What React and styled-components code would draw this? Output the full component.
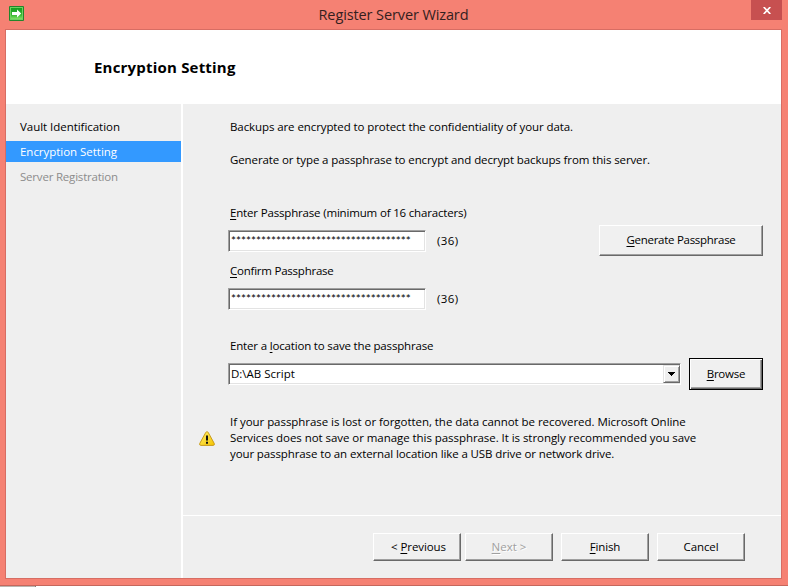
import React from "react";
import styled, { createGlobalStyle, css } from "styled-components";

const GlobalStyle = createGlobalStyle`
  html, body { margin: 0; padding: 0; overflow: hidden; background: #fff; }
  * { box-sizing: border-box; }
`;

const Desktop = styled.div`
  width: 788px;
  height: 587px;
  background: linear-gradient(90deg, #bab5b0 35px, #807c78 35px, #807c78 36px, #fff 36px);
  font: 11.5px/16px "Open Sans", "Noto Sans", sans-serif;
  color: #000;
`;

const WindowFrame = styled.section`
  width: 788px;
  height: 586px;
  display: flex;
  flex-direction: column;
  padding: 0 6px 6px 5px;
  background: #f58173;
  border-bottom: 1px solid #c5675c;
`;

const TitleBar = styled.header`
  flex: none;
  height: 29px;
  display: grid;
  grid-template-columns: 31px 1fr 31px;
  align-items: start;
`;

const AppIcon = styled.svg`
  display: block;
  margin: 6px 0 0 4px;
`;

const WindowTitle = styled.div`
  padding-top: 5px;
  text-align: center;
  font-size: 14.5px;
  line-height: 20px;
  letter-spacing: -0.11px;
  color: #33201e;
`;

const CloseButton = styled.button`
  width: 31px;
  height: 20px;
  padding: 0;
  border: 0;
  background: #c75050;
  display: flex;
  align-items: center;
  justify-content: center;
`;

const Client = styled.main`
  flex: 1;
  min-height: 0;
  display: flex;
  flex-direction: column;
  border: 1px solid #d76d63;
  background: #efefef;
`;

const PageHeader = styled.div`
  flex: none;
  height: 74px;
  padding: 27px 0 0 88px;
  background: #fff;
`;

const PageTitle = styled.h1`
  margin: 0;
  font-size: 15px;
  line-height: 20px;
  font-weight: 700;
  letter-spacing: 0.2px;
`;

const Body = styled.div`
  flex: 1;
  min-height: 0;
  display: flex;
`;

const Steps = styled.nav`
  width: 177px;
  padding-top: 12px;
  border-right: 2px solid #fff;
  display: flex;
  flex-direction: column;
  gap: 4px;
`;

const Step = styled.div`
  height: 21px;
  padding-left: 14px;
  line-height: 21px;
  letter-spacing: ${(p) => p.$track || 0}px;
  color: ${(p) => (p.$disabled ? "#8c8c8c" : "#000")};
  ${(p) => p.$active && css`background: #3399ff; color: #fff;`}
`;

const Content = styled.div`
  flex: 1;
  display: flex;
  flex-direction: column;
`;

const Form = styled.div`
  height: 411px;
  padding: 15px 18px 0 45px;
`;

const Line = styled.div`
  height: 16px;
  margin-left: ${(p) => p.$indent || 0}px;
  margin-top: ${(p) => p.$top || 0}px;
  letter-spacing: ${(p) => p.$track || 0}px;
  white-space: nowrap;
`;

const Key = styled.span`
  text-decoration: underline;
  text-decoration-thickness: 1px;
  text-underline-offset: 2px;
  text-decoration-skip-ink: none;
`;

const FieldRow = styled.div`
  display: flex;
  align-items: flex-start;
  margin-top: ${(p) => p.$top}px;
  height: ${(p) => p.$height}px;
`;

const sunken = css`
  border: 1px solid;
  border-color: #a0a0a0 #fff #fff #a0a0a0;
  box-shadow: inset 1px 1px #696969, inset -1px -1px #e3e3e3;
  background: #fff;
`;

const PasswordBox = styled.div`
  ${sunken}
  width: 198px;
  height: 22px;
  margin: ${(p) => p.$offset || 0}px 0 0;
  padding: 2px 0 0 2px;
  font-family: Lato, sans-serif;
  font-size: 11.76px;
  line-height: 16px;
`;

const Count = styled.span`
  width: 24px;
  margin: ${(p) => p.$offset || 0}px 0 0 11px;
  padding-top: 3px;
  letter-spacing: 0.4px;
`;

const Combo = styled.div`
  ${sunken}
  display: flex;
  width: 453px;
  height: 22px;
  margin-top: 5px;
  padding: 1px 0 1px 2px;
`;

const ComboText = styled.span`
  flex: 1;
  line-height: 18px;
`;

const ComboArrow = styled.span`
  width: 17px;
  height: 18px;
  display: flex;
  align-items: center;
  justify-content: center;
  background: #efefef;
  border: 1px solid;
  border-color: #e3e3e3 #696969 #696969 #e3e3e3;
  box-shadow: inset 1px 1px #fff, inset -1px -1px #a0a0a0;
`;

const Button = styled.button`
  flex: none;
  width: ${(p) => p.$width || 88}px;
  height: ${(p) => p.$height || 28}px;
  margin: 0 0 0 ${(p) => p.$left || 0}px;
  padding: 0 0 ${(p) => p.$lift || 0}px ${(p) => p.$shift || 0}px;
  border: 1px solid;
  border-color: #fff #696969 #696969 #fff;
  box-shadow: inset -1px -1px #a0a0a0;
  background: #f0f0f0;
  color: ${(p) => (p.disabled ? "#a0a0a0" : "#000")};
  text-shadow: ${(p) => (p.disabled ? "1px 1px #fff" : "none")};
  font: inherit;
  letter-spacing: ${(p) => p.$track || 0}px;
  white-space: nowrap;
  ${(p) =>
    p.$focused &&
    css`
      border-color: #000;
      box-shadow: inset 1px 1px #fff, inset -1px -1px #696969, inset -2px -2px #a0a0a0;
    `}
`;

const Notice = styled.div`
  display: flex;
  margin: 24px 0 0 -29px;
`;

const WarningIcon = styled.svg`
  flex: none;
  margin: 17px 15px 0 0;
`;

const Footer = styled.footer`
  flex: 1;
  display: flex;
  align-items: flex-start;
  padding: 17px 0 0 190px;
  border-top: 1px solid #fff;
`;

const MASK = "*".repeat(36);

export default function App() {
  return (
    <Desktop>
      <GlobalStyle />
      <WindowFrame>
        <TitleBar>
          <AppIcon width="15" height="15" viewBox="0 0 15 15">
            <defs>
              <linearGradient id="green" x1="0" y1="0" x2="0" y2="1">
                <stop offset="0" stopColor="#159b20" />
                <stop offset="0.6" stopColor="#35b52e" />
                <stop offset="1" stopColor="#8ae66c" />
              </linearGradient>
            </defs>
            <rect width="15" height="15" rx="1" fill="#23862a" />
            <rect x="1.5" y="1.5" width="12" height="12" fill="url(#green)" stroke="#6fd160" />
            <path d="M3 6h5V3.5L12.200 7.5 8 11.500V9H3z" fill="#fff" />
          </AppIcon>
          <WindowTitle>Register Server Wizard</WindowTitle>
          <CloseButton aria-label="Close">
            <svg width="8" height="7" viewBox="0 0 8 7">
              <path d="M0.7 0L7.3 7M7.3 0L0.7 7" stroke="#fff" strokeWidth="1.7" />
            </svg>
          </CloseButton>
        </TitleBar>
        <Client>
          <PageHeader>
            <PageTitle>Encryption Setting</PageTitle>
          </PageHeader>
          <Body>
            <Steps>
              <Step $track={-0.04}>Vault Identification</Step>
              <Step $active $track={-0.03}>Encryption Setting</Step>
              <Step $disabled $track={-0.2}>Server Registration</Step>
            </Steps>
            <Content>
              <Form>
                <Line $indent={2} $track={-0.09}>
                  Backups are encrypted to protect the confidentiality of your data.
                </Line>
                <Line $indent={2} $top={17} $track={-0.105}>
                  Generate or type a passphrase to encrypt and decrypt backups from this server.
                </Line>
                <Line $indent={2} $top={37} $track={-0.17}>
                  <Key>E</Key>nter Passphrase (minimum of 16 characters)
                </Line>
                <FieldRow $top={4} $height={31}>
                  <PasswordBox $offset={5}>{MASK}</PasswordBox>
                  <Count $offset={5}>(36)</Count>
                  <Button $width={164} $height={31} $left={138} $lift={2} $track={-0.28}>
                    <Key>G</Key>enerate Passphrase
                  </Button>
                </FieldRow>
                <Line $indent={2} $top={7} $track={-0.23}>
                  <Key>C</Key>onfirm Passphrase
                </Line>
                <FieldRow $top={9} $height={22}>
                  <PasswordBox>{MASK}</PasswordBox>
                  <Count>(36)</Count>
                </FieldRow>
                <Line $indent={2} $top={28} $track={-0.17}>
                  Enter a <Key>l</Key>ocation to save the passphrase
                </Line>
                <FieldRow $top={4} $height={32}>
                  <Combo>
                    <ComboText>D:\AB Script</ComboText>
                    <ComboArrow>
                      <svg width="7" height="4" viewBox="0 0 7 4" shapeRendering="crispEdges">
                        <path d="M0 0h7v1H0zM1 1h5v1H1zM2 2h3v1H2zM3 3h1v1H3z" />
                      </svg>
                    </ComboArrow>
                  </Combo>
                  <Button $focused $width={74} $height={32} $left={8} $track={-0.2}>
                    <Key>B</Key>rowse
                  </Button>
                </FieldRow>
                <Notice>
                  <WarningIcon width="16" height="15" viewBox="0 0 16 15">
                    <defs>
                      <linearGradient id="amber" x1="0" y1="0" x2="1" y2="1">
                        <stop offset="0" stopColor="#ffef6a" />
                        <stop offset="1" stopColor="#f5c400" />
                      </linearGradient>
                    </defs>
                    <path
                      d="M8 .7q.8 0 1.3.9l6 11q.5 1.8-1.2 1.8H1.9Q.2 14.4 .7 12.6l6-11Q7.2 .7 8 .7z"
                      fill="url(#amber)"
                      stroke="#c89b1c"
                    />
                    <path d="M7 4.5h2v5H7zM7 10.7h2v2H7z" fill="#111" />
                  </WarningIcon>
                  <div>
                    <Line $track={-0.045}>
                      If your passphrase is lost or forgotten, the data cannot be recovered. Microsoft Online
                    </Line>
                    <Line $track={-0.055}>
                      Services does not save or manage this passphrase. It is strongly recommended you save
                    </Line>
                    <Line $track={-0.11}>
                      your passphrase to an external location like a USB drive or network drive.
                    </Line>
                  </div>
                </Notice>
              </Form>
              <Footer>
                <Button $track={-0.08} $shift={3}>&lt; <Key>P</Key>revious</Button>
                <Button disabled $left={4}><Key>N</Key>ext &gt;</Button>
                <Button $left={8} $track={-0.13}><Key>F</Key>inish</Button>
                <Button $left={8} $track={-0.1}>Cancel</Button>
              </Footer>
            </Content>
          </Body>
        </Client>
      </WindowFrame>
    </Desktop>
  );
}
